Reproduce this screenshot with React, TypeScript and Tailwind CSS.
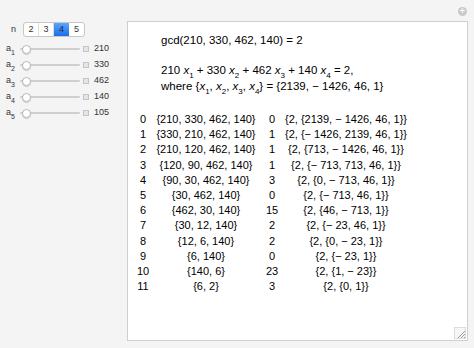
import React from "react";

const rows: [string, string, string, string][] = [
  ["0", "{210, 330, 462, 140}", "0", "{2, {2139, − 1426, 46, 1}}"],
  ["1", "{330, 210, 462, 140}", "1", "{2, {− 1426, 2139, 46, 1}}"],
  ["2", "{210, 120, 462, 140}", "1", "{2, {713, − 1426, 46, 1}}"],
  ["3", "{120, 90, 462, 140}", "1", "{2, {− 713, 713, 46, 1}}"],
  ["4", "{90, 30, 462, 140}", "3", "{2, {0, − 713, 46, 1}}"],
  ["5", "{30, 462, 140}", "0", "{2, {− 713, 46, 1}}"],
  ["6", "{462, 30, 140}", "15", "{2, {46, − 713, 1}}"],
  ["7", "{30, 12, 140}", "2", "{2, {− 23, 46, 1}}"],
  ["8", "{12, 6, 140}", "2", "{2, {0, − 23, 1}}"],
  ["9", "{6, 140}", "0", "{2, {− 23, 1}}"],
  ["10", "{140, 6}", "23", "{2, {1, − 23}}"],
  ["11", "{6, 2}", "3", "{2, {0, 1}}"],
];

const sliders = [
  { i: 1, v: 210 },
  { i: 2, v: 330 },
  { i: 3, v: 462 },
  { i: 4, v: 140 },
  { i: 5, v: 105 },
];

function X({ n }: { n: number }) {
  return (
    <span>
      <span className="italic">x</span>
      <sub className="text-[8px] align-[-2px]">{n}</sub>
    </span>
  );
}

export default function App() {
  return (
    <div className="w-[474px] h-[348px] bg-[#f4f4f4] flex font-['Liberation_Sans',Arial,sans-serif] overflow-hidden">
      {/* controls */}
      <div className="w-[127px] pt-[22px] text-[9px] text-[#333]">
        <div className="flex items-center h-[15px]">
          <span className="w-[23px] pl-[11px] text-[9px]">n</span>
          <div className="flex h-[15px] rounded-[3px] border border-[#c8c8c8] bg-white overflow-hidden">
            {["2", "3", "4", "5"].map((b) => (
              <div
                key={b}
                className={
                  b === "4"
                    ? "w-[15px] flex items-center justify-center bg-gradient-to-b from-[#5aa6f8] to-[#1a6fe8] text-[#1b2c4a]"
                    : "w-[15px] flex items-center justify-center border-r border-[#dcdcdc] last:border-r-0"
                }
              >
                {b}
              </div>
            ))}
          </div>
        </div>
        <div className="flex flex-col mt-[4px]">
          {sliders.map((s) => (
            <div key={s.i} className="flex items-center h-[16px]">
              <span className="w-[20px] pl-[6px]">
                a<sub className="text-[7px] align-[-2px]">{s.i}</sub>
              </span>
              <div className="relative w-[60px] h-[10px] flex items-center">
                <div className="w-full h-[2px] bg-[#cfcfcf] rounded-full" />
                <div className="absolute left-[2px] w-[9px] h-[9px] rounded-full bg-white border border-[#b9b9b9] shadow-[0_1px_1px_rgba(0,0,0,0.15)]" />
              </div>
              <div className="ml-[3px] w-[6px] h-[6px] border border-[#c4c4c4] bg-[#e6e6e6]" />
              <span className="ml-[5px]">{s.v}</span>
            </div>
          ))}
        </div>
      </div>

      {/* output */}
      <div className="flex flex-col pt-[7px]">
        <div className="flex justify-end h-[14px] pr-[1px] w-[341px]">
          <div className="w-[9px] h-[9px] rounded-full bg-[#c9c9c9] text-white text-[9px] leading-[9px] text-center font-bold">
            +
          </div>
        </div>
        <div className="relative w-[341px] h-[320px] bg-white border border-[#cfcfcf] text-[11px] text-black whitespace-nowrap">
          <div className="pl-[33px] pt-[10px] leading-[16px] text-[11.5px]">
            <div>gcd(210, 330, 462, 140) = 2</div>
            <div className="mt-[14px]">
              210 <X n={1} /> + 330 <X n={2} /> + 462 <X n={3} /> + 140 <X n={4} /> = 2,
            </div>
            <div>
              where {"{"}
              <X n={1} />, <X n={2} />, <X n={3} />, <X n={4} />
              {"}"} = {"{"}2139, − 1426, 46, 1{"}"}
            </div>
          </div>
          <div className="mt-[18px] ml-[5px] grid grid-cols-[20px_106px_26px_122px] leading-[15.2px]">
            {rows.map((r) => (
              <React.Fragment key={r[0]}>
                <div className="text-center">{r[0]}</div>
                <div className="text-center">{r[1]}</div>
                <div className="text-center">{r[2]}</div>
                <div className="text-center">{r[3]}</div>
              </React.Fragment>
            ))}
          </div>
          <svg className="absolute right-[1px] bottom-[1px]" width="12" height="12" viewBox="0 0 12 12">
            <rect x="0.5" y="0.5" width="11" height="11" fill="#f6f6f6" stroke="#dddddd" />
            <path d="M11 4 L4 11 M11 7 L7 11 M11 10 L10 11" stroke="#9a9a9a" strokeWidth="1" />
          </svg>
        </div>
      </div>
    </div>
  );
}
